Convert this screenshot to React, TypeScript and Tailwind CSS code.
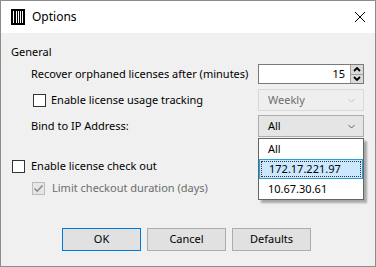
import React from 'react'

const font = { fontFamily: '"Noto Sans", "Open Sans", sans-serif' }

function Check({ checked = false, disabled = false }: { checked?: boolean; disabled?: boolean }) {
  return (
    <div
      className={`w-[13px] h-[13px] border flex items-center justify-center shrink-0 ${disabled ? 'border-[#bcbcbc] bg-[#e6e6e6]' : 'border-[#333333] bg-white'}`}
    >
      {checked && (
        <svg width="11" height="11" viewBox="0 0 11 11">
          <path d="M1.5 5.5 L4.2 8.2 L9.5 2.5" fill="none" stroke={disabled ? '#8a8a8a' : '#000'} strokeWidth="1.6" />
        </svg>
      )}
    </div>
  )
}

function Chevron({ color }: { color: string }) {
  return (
    <svg width="7" height="5" viewBox="0 0 7 5">
      <path d="M0.5 1 L3.5 4 L6.5 1" fill="none" stroke={color} strokeWidth="1" />
    </svg>
  )
}

export default function App() {
  return (
    <div className="w-[376px] h-[267px] border border-[#8c8c8c] flex flex-col text-[11px] text-black whitespace-nowrap" style={font}>
      {/* title bar */}
      <div className="h-[32px] bg-white flex items-center shrink-0 text-[12px]">
        <svg width="14" height="16" viewBox="0 0 14 16" className="ml-[10px]">
          <rect x="0" y="0" width="14" height="16" fill="#000" />
          <rect x="2" y="2" width="1" height="12" fill="#fff" />
          <rect x="5" y="2" width="1" height="12" fill="#fff" />
          <rect x="7" y="2" width="1" height="12" fill="#fff" />
          <rect x="9" y="2" width="1" height="12" fill="#fff" />
          <rect x="11" y="2" width="1" height="12" fill="#fff" />
        </svg>
        <span className="ml-[7px]">Options</span>
        <svg width="10" height="10" viewBox="0 0 10 10" className="ml-auto mr-[10px]">
          <path d="M0 0 L10 10 M10 0 L0 10" stroke="#000" strokeWidth="1" />
        </svg>
      </div>

      {/* body */}
      <div className="flex-1 bg-[#f0f0f0] relative flex flex-col">
        <div className="mt-[11px] h-[16px] flex items-center pl-[10px]">General</div>

        <div className="mt-[4px] h-[20px] flex items-center pl-[30px]">
          <span>Recover orphaned licenses after (minutes)</span>
          <div className="ml-auto mr-[11px] w-[106px] h-[20px] border border-[#7a7a7a] bg-white flex">
            <div className="flex-1 text-right pr-[5px] leading-[18px]">15</div>
            <div className="w-[13px] flex flex-col border-l border-[#a0a0a0]">
              <div className="flex-1 bg-[#dadada] border-b border-[#a0a0a0] flex items-center justify-center">
                <svg width="8" height="5" viewBox="0 0 8 5">
                  <path d="M1 4 L4 1 L7 4" fill="none" stroke="#000" strokeWidth="1.8" />
                </svg>
              </div>
              <div className="flex-1 bg-[#dadada] flex items-center justify-center">
                <svg width="8" height="5" viewBox="0 0 8 5">
                  <path d="M1 1 L4 4 L7 1" fill="none" stroke="#000" strokeWidth="1.8" />
                </svg>
              </div>
            </div>
          </div>
        </div>

        <div className="mt-[5px] h-[22px] flex items-center pl-[32px]">
          <Check />
          <span className="ml-[5px]">Enable license usage tracking</span>
          <div className="ml-auto mr-[11px] w-[106px] h-[22px] border border-[#d9d9d9] bg-[#efefef] flex items-center pl-[9px] pr-[8px]">
            <span className="text-[#6d6d6d]">Weekly</span>
            <span className="ml-auto flex"><Chevron color="#c4c4c4" /></span>
          </div>
        </div>

        <div className="mt-[4px] h-[22px] flex items-center pl-[30px]">
          <span>Bind to IP Address:</span>
          <div className="ml-auto mr-[11px] w-[106px] h-[22px] border border-[#acacac] bg-[#e5e5e5] flex items-center pl-[9px] pr-[8px]">
            <span>All</span>
            <span className="ml-auto flex"><Chevron color="#606060" /></span>
          </div>
        </div>

        <div className="mt-[21px] h-[16px] flex items-center pl-[11px]">
          <Check />
          <span className="ml-[6px]">Enable license check out</span>
        </div>

        <div className="mt-[6px] h-[16px] flex items-center pl-[31px]">
          <Check checked disabled />
          <span className="ml-[7px] text-[#6d6d6d]">Limit checkout duration (days)</span>
        </div>

        <div className="mt-[32px] flex gap-[6px] pl-[61px]">
          <button className="w-[79px] h-[23px] bg-[#e1e1e1] border border-[#0078d7]">OK</button>
          <button className="w-[79px] h-[23px] bg-[#e1e1e1] border border-[#adadad]">Cancel</button>
          <button className="w-[79px] h-[23px] bg-[#e1e1e1] border border-[#adadad]">Defaults</button>
        </div>

        {/* open dropdown list */}
        <div className="absolute left-[257px] top-[105px] w-[106px] bg-white border border-[#646464] shadow-[3px_3px_2px_rgba(0,0,0,0.3)]">
          <div className="h-[20px] flex items-center pl-[9px]">All</div>
          <div className="h-[20px] bg-[#cce8ff] border border-[#26a0da] p-[1px]">
            <div className="h-full border border-dotted border-[#333] flex items-center pl-[7px]">172.17.221.97</div>
          </div>
          <div className="h-[20px] flex items-center pl-[9px]">10.67.30.61</div>
        </div>
      </div>
    </div>
  )
}
